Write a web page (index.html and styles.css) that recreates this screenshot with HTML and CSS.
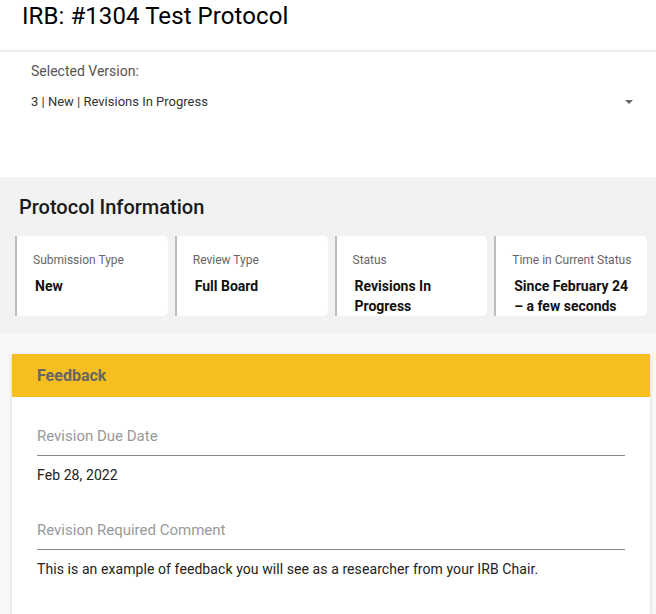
FILE: index.html
```html
<!DOCTYPE html>
<html lang="en">
<head>
<meta charset="utf-8">
<title>IRB: #1304 Test Protocol</title>
<link rel="stylesheet" href="styles.css">
</head>
<body>
  <header class="page-header">
    <h1 class="page-title">IRB: #1304 Test Protocol</h1>
  </header>

  <section class="version">
    <div class="version-label">Selected Version:</div>
    <div class="version-select">
      <span class="version-value">3 | New | Revisions In Progress</span>
      <span class="select-arrow"></span>
    </div>
  </section>

  <section class="info">
    <h2 class="info-title">Protocol Information</h2>
    <div class="info-cards">
      <div class="info-card">
        <div class="card-label">Submission Type</div>
        <div class="card-value">New</div>
      </div>
      <div class="info-card">
        <div class="card-label">Review Type</div>
        <div class="card-value">Full Board</div>
      </div>
      <div class="info-card">
        <div class="card-label">Status</div>
        <div class="card-value">Revisions In Progress</div>
      </div>
      <div class="info-card">
        <div class="card-label">Time in Current Status</div>
        <div class="card-value">Since February 24 – a few seconds</div>
      </div>
    </div>
  </section>

  <main class="content">
    <div class="feedback">
      <div class="feedback-header">Feedback</div>
      <div class="feedback-body">
        <div class="field">
          <div class="field-label">Revision Due Date</div>
          <div class="field-value">Feb 28, 2022</div>
        </div>
        <div class="field">
          <div class="field-label">Revision Required Comment</div>
          <div class="field-value">This is an example of feedback you will see as a researcher from your IRB Chair.</div>
        </div>
      </div>
    </div>
  </main>
</body>
</html>
```

FILE: styles.css
```css
* { box-sizing: border-box; }

html, body {
  margin: 0;
  padding: 0;
  background: #f8f8f8;
  font-family: Roboto, "Liberation Sans", Arial, sans-serif;
  color: #222;
  height: 100%;
  overflow: hidden;
}

.page-header {
  background: #fff;
  height: 52px;
  padding: 0 22px;
  border-bottom: 2px solid #eeeeee;
}

.page-title {
  margin: 0;
  font-size: 24px;
  line-height: 32px;
  font-weight: 400;
  letter-spacing: 0.08px;
  color: #000;
}

.version {
  background: #fff;
  height: 125px;
  padding: 11px 23px 0 31px;
}

.version-label {
  font-size: 14px;
  line-height: 16px;
  color: #555;
}

.version-select {
  display: flex;
  align-items: center;
  justify-content: space-between;
  margin-top: 15px;
  height: 16px;
}

.version-value {
  font-size: 13px;
  line-height: 16px;
  color: #333;
}

.select-arrow {
  width: 0;
  height: 0;
  border-left: 4.5px solid transparent;
  border-right: 4.5px solid transparent;
  border-top: 4.5px solid #666;
}

.info {
  background: #f2f2f2;
  height: 156px;
  padding: 18px 9px 0 15px;
}

.info-title {
  margin: 0 0 17px 4px;
  font-size: 20px;
  line-height: 24px;
  font-weight: 500;
  color: #1a1a1a;
}

.info-cards {
  display: grid;
  grid-template-columns: repeat(4, 1fr);
  gap: 7px;
}

.info-card {
  background: #fff;
  height: 80px;
  overflow: hidden;
  border-left: 2px solid #bdbdbd;
  border-radius: 0 5px 5px 0;
  padding: 16px 10px 0 16px;
}

.card-label {
  font-size: 12px;
  line-height: 16px;
  color: #666;
}

.card-value {
  margin-top: 8px;
  padding-left: 2px;
  font-size: 14px;
  line-height: 20px;
  font-weight: 700;
  color: #111;
}

.content {
  padding: 21px 6px 0 12px;
}

.feedback {
  background: #fff;
  box-shadow: 0 1px 4px rgba(0, 0, 0, 0.16);
  min-height: 260px;
}

.feedback-header {
  background: #f6be1e;
  height: 43px;
  padding: 0 25px;
  font-size: 16px;
  line-height: 43px;
  font-weight: 700;
  color: #666;
}

.feedback-body {
  padding: 30px 25px 0 25px;
}

.field + .field {
  margin-top: 36px;
}

.field-label {
  font-size: 15px;
  line-height: 18px;
  color: #999;
  padding-bottom: 10px;
  border-bottom: 1px solid #888;
}

.field-value {
  margin-top: 9px;
  font-size: 14px;
  line-height: 20px;
  letter-spacing: 0.08px;
  color: #222;
}
```
